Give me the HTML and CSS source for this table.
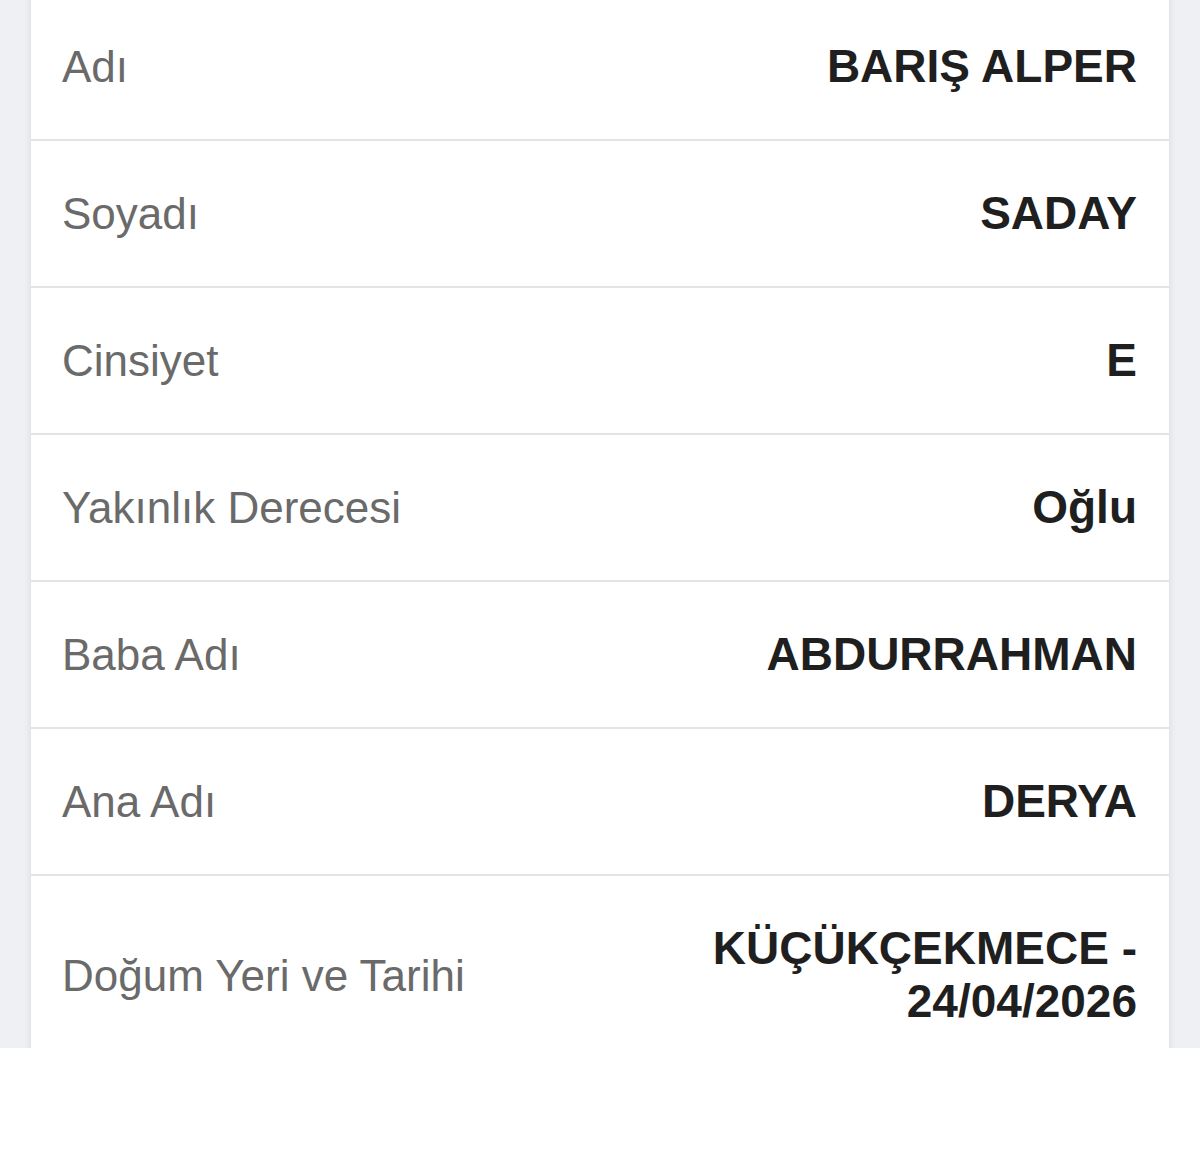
FILE: index.html
```html
<!DOCTYPE html>
<html lang="tr">
<head>
<meta charset="UTF-8">
<meta name="viewport" content="width=device-width, initial-scale=1.0">
<title>Kimlik Bilgileri</title>
<link rel="stylesheet" href="styles.css">
</head>
<body>

<div class="screen">
    <div class="info-card">
        <div class="info-row">
            <span class="label">Adı</span>
            <span class="value">BARIŞ ALPER</span>
        </div>
        <div class="info-row">
            <span class="label">Soyadı</span>
            <span class="value">SADAY</span>
        </div>
        <div class="info-row">
            <span class="label">Cinsiyet</span>
            <span class="value">E</span>
        </div>
        <div class="info-row">
            <span class="label">Yakınlık Derecesi</span>
            <span class="value">Oğlu</span>
        </div>
        <div class="info-row">
            <span class="label">Baba Adı</span>
            <span class="value">ABDURRAHMAN</span>
        </div>
        <div class="info-row">
            <span class="label">Ana Adı</span>
            <span class="value">DERYA</span>
        </div>
        <div class="info-row">
            <span class="label">Doğum Yeri ve Tarihi</span>
            <span class="value">KÜÇÜKÇEKMECE - 24/04/2026</span>
        </div>
    </div>
</div>

</body>
</html>
```

FILE: styles.css
```css
body {
    margin: 0;
    background-color: #ffffff;
    font-family: "Liberation Sans", Arial, sans-serif;
}

.screen {
    height: 1048px;
    overflow: hidden;
    background-color: #eef0f3;
    padding: 0 31px;
}

.info-card {
    margin-top: -6px;
    background-color: #ffffff;
    box-shadow: 0 0 8px rgba(0, 0, 0, 0.10);
}

.info-row {
    display: flex;
    justify-content: space-between;
    align-items: center;
    gap: 40px;
    padding: 46px 32px 46px 31px;
    border-bottom: 2px solid #e3e4e6;
    line-height: 53px;
}

.label {
    font-size: 44px;
    color: #6a6a6a;
    white-space: nowrap;
}

.value {
    font-size: 46px;
    font-weight: bold;
    color: #1f1f1f;
    text-align: right;
    max-width: 440px;
}
```
